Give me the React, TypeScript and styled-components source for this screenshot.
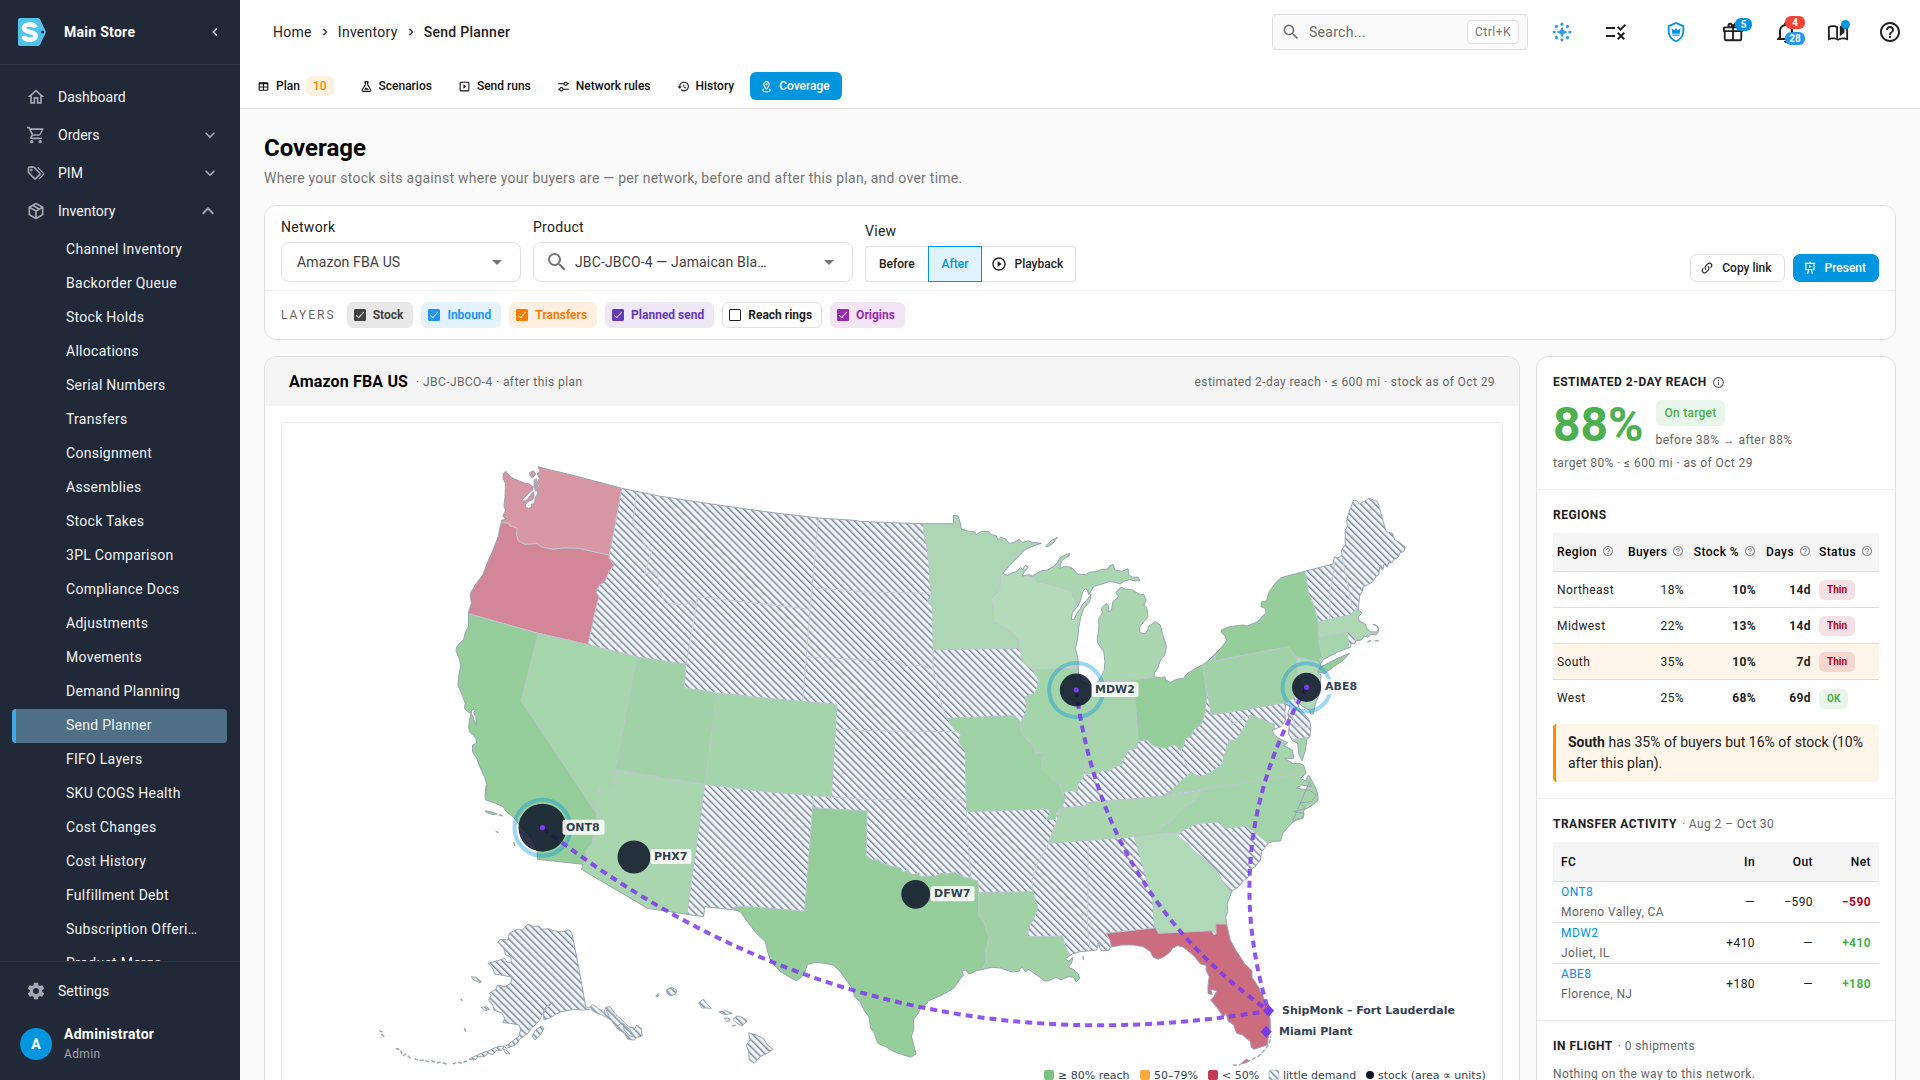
import React from 'react';
import styled, { createGlobalStyle, css } from 'styled-components';
import { MdRule, MdHelpOutline, MdInfoOutline, MdPlayCircleOutline } from 'react-icons/md';

const GlobalStyle = createGlobalStyle`
  *, *::before, *::after { box-sizing: border-box; }
  body { margin: 0; background: #fafafa; }
  body, button, input, select { font-family: Roboto, "Liberation Sans", sans-serif; }
  button { cursor: pointer; }
  a { text-decoration: none; color: inherit; }
`;

const blue = '#0095df';
const line = '#e0e0e0';
const muted = '#757575';

/* ---------- icons ---------- */

const icons = {
  home: 'M12 5.69l5 4.5V18h-2v-6H9v6H7v-7.81l5-4.5M12 3L2 12h3v8h6v-6h2v6h6v-8h3L12 3Z',
  cart: 'M17,18A2,2 0 0,1 19,20A2,2 0 0,1 17,22C15.89,22 15,21.1 15,20C15,18.89 15.89,18 17,18M1,2H4.27L5.21,4H20A1,1 0 0,1 21,5C21,5.17 20.95,5.34 20.88,5.5L17.3,11.97C16.96,12.58 16.3,13 15.55,13H8.1L7.2,14.63L7.17,14.75A0.25,0.25 0 0,0 7.42,15H19V17H7C5.89,17 5,16.1 5,15C5,14.65 5.09,14.32 5.24,14.04L6.6,11.59L3,4H1V2M7,18A2,2 0 0,1 9,20A2,2 0 0,1 7,22C5.89,22 5,21.1 5,20C5,18.89 5.89,18 7,18M16,11L18.78,6H6.14L8.5,11H16Z',
  tags: 'M6.5 10C7.3 10 8 9.3 8 8.5S7.3 7 6.5 7 5 7.7 5 8.5 5.7 10 6.5 10M9 6L16 13L11 18L4 11V6H9M9 4H4C2.9 4 2 4.9 2 6V11C2 11.6 2.2 12.1 2.6 12.4L9.6 19.4C9.9 19.8 10.4 20 11 20S12.1 19.8 12.4 19.4L17.4 14.4C17.8 14 18 13.5 18 13C18 12.4 17.8 11.9 17.4 11.6L10.4 4.6C10.1 4.2 9.6 4 9 4M13.5 5.7L14.5 4.7L21.4 11.6C21.8 12 22 12.5 22 13S21.8 14.1 21.4 14.4L16 19.8L15 18.8L20.7 13L13.5 5.7Z',
  box: 'M21,16.5C21,16.88 20.79,17.21 20.47,17.38L12.57,21.82C12.41,21.94 12.21,22 12,22C11.79,22 11.59,21.94 11.43,21.82L3.53,17.38C3.21,17.21 3,16.88 3,16.5V7.5C3,7.12 3.21,6.79 3.53,6.62L11.43,2.18C11.59,2.06 11.79,2 12,2C12.21,2 12.41,2.06 12.57,2.18L20.47,6.62C20.79,6.79 21,7.12 21,7.5V16.5M12,4.15L10.11,5.22L16,8.61L17.96,7.5L12,4.15M6.04,7.5L12,10.85L13.96,9.75L8.08,6.35L6.04,7.5M5,15.91L11,19.29V12.58L5,9.21V15.91M19,15.91V9.21L13,12.58V19.29L19,15.91Z',
  cog: 'M12,15.5A3.5,3.5 0 0,1 8.5,12A3.5,3.5 0 0,1 12,8.5A3.5,3.5 0 0,1 15.5,12A3.5,3.5 0 0,1 12,15.5M19.43,12.97C19.47,12.65 19.5,12.33 19.5,12C19.5,11.67 19.47,11.34 19.43,11L21.54,9.37C21.73,9.22 21.78,8.95 21.66,8.73L19.66,5.27C19.54,5.05 19.27,4.96 19.05,5.05L16.56,6.05C16.04,5.66 15.5,5.32 14.87,5.07L14.5,2.42C14.46,2.18 14.25,2 14,2H10C9.75,2 9.54,2.18 9.5,2.42L9.13,5.07C8.5,5.32 7.96,5.66 7.44,6.05L4.95,5.05C4.73,4.96 4.46,5.05 4.34,5.27L2.34,8.73C2.21,8.95 2.27,9.22 2.46,9.37L4.57,11C4.53,11.34 4.5,11.67 4.5,12C4.5,12.33 4.53,12.65 4.57,12.97L2.46,14.63C2.27,14.78 2.21,15.05 2.34,15.27L4.34,18.73C4.46,18.95 4.73,19.03 4.95,18.95L7.44,17.94C7.96,18.34 8.5,18.68 9.13,18.93L9.5,21.58C9.54,21.82 9.75,22 10,22H14C14.25,22 14.46,21.82 14.5,21.58L14.87,18.93C15.5,18.67 16.04,18.34 16.56,17.94L19.05,18.95C19.27,19.03 19.54,18.95 19.66,18.73L21.66,15.27C21.78,15.05 21.73,14.78 21.54,14.63L19.43,12.97Z',
  down: 'M7.41,8.58L12,13.17L16.59,8.58L18,10L12,16L6,10L7.41,8.58Z',
  up: 'M7.41,15.41L12,10.83L16.59,15.41L18,14L12,8L6,14L7.41,15.41Z',
  left: 'M15.41,16.58L10.83,12L15.41,7.41L14,6L8,12L14,18L15.41,16.58Z',
  right: 'M8.59,16.58L13.17,12L8.59,7.41L10,6L16,12L10,18L8.59,16.58Z',
  search: 'M9.5,3A6.5,6.5 0 0,1 16,9.5C16,11.11 15.41,12.59 14.44,13.73L14.71,14H15.5L20.5,19L19,20.5L14,15.5V14.71L13.73,14.44C12.59,15.41 11.11,16 9.5,16A6.5,6.5 0 0,1 3,9.5A6.5,6.5 0 0,1 9.5,3M9.5,5C7,5 5,7 5,9.5C5,12 7,14 9.5,14C12,14 14,12 14,9.5C14,7 12,5 9.5,5Z',
  caret: 'M7,10L12,15L17,10H7Z',
  table: 'M5,4H19A2,2 0 0,1 21,6V18A2,2 0 0,1 19,20H5A2,2 0 0,1 3,18V6A2,2 0 0,1 5,4M5,8V12H11V8H5M13,8V12H19V8H13M5,14V18H11V14H5M13,14V18H19V14H13Z',
  flask: 'M5,19A1,1 0 0,0 6,20H18A1,1 0 0,0 19,19C19,18.79 18.93,18.59 18.82,18.43L13,8.35V4H11V8.35L5.18,18.43C5.07,18.59 5,18.79 5,19M6,22A3,3 0 0,1 3,19C3,18.4 3.18,17.84 3.5,17.37L9,7.81V6A1,1 0 0,1 8,5V4A2,2 0 0,1 10,2H14A2,2 0 0,1 16,4V5A1,1 0 0,1 15,6V7.81L20.5,17.37C20.82,17.84 21,18.4 21,19A3,3 0 0,1 18,22H6M13,16L14.34,14.66L16.27,18H7.73L10.39,13.39L13,16M12.5,12A0.5,0.5 0 0,1 13,12.5A0.5,0.5 0 0,1 12.5,13A0.5,0.5 0 0,1 12,12.5A0.5,0.5 0 0,1 12.5,12Z',
  playBox: 'M19,19H5V5H19M19,3H5A2,2 0 0,0 3,5V19A2,2 0 0,0 5,21H19A2,2 0 0,0 21,19V5A2,2 0 0,0 19,3M10,8V16L15,12',
  tune: 'M8,13C6.14,13 4.59,14.28 4.14,16H2V18H4.14C4.59,19.72 6.14,21 8,21C9.86,21 11.41,19.72 11.86,18H22V16H11.86C11.41,14.28 9.86,13 8,13M8,19C6.9,19 6,18.1 6,17C6,15.9 6.9,15 8,15C9.1,15 10,15.9 10,17C10,18.1 9.1,19 8,19M19.86,6C19.41,4.28 17.86,3 16,3C14.14,3 12.59,4.28 12.14,6H2V8H12.14C12.59,9.72 14.14,11 16,11C17.86,11 19.41,9.72 19.86,8H22V6H19.86M16,9C14.9,9 14,8.1 14,7C14,5.9 14.9,5 16,5C17.1,5 18,5.9 18,7C18,8.1 17.1,9 16,9Z',
  history: 'M13.5,8H12V13L16.28,15.54L17,14.33L13.5,12.25V8M13,3A9,9 0 0,0 4,12H1L4.96,16.03L9,12H6A7,7 0 0,1 13,5A7,7 0 0,1 20,12A7,7 0 0,1 13,19C11.07,19 9.32,18.21 8.06,16.94L6.64,18.36C8.27,20 10.5,21 13,21A9,9 0 0,0 22,12A9,9 0 0,0 13,3',
  marker: 'M12 4C14.2 4 16 5.8 16 8C16 10.1 13.9 13.5 12 15.9C10.1 13.4 8 10.1 8 8C8 5.8 9.8 4 12 4M12 2C8.7 2 6 4.7 6 8C6 12.5 12 19 12 19S18 12.4 18 8C18 4.7 15.3 2 12 2M12 6C10.9 6 10 6.9 10 8S10.9 10 12 10 14 9.1 14 8 13.1 6 12 6M20 19C20 21.2 16.4 23 12 23S4 21.2 4 19C4 17.7 5.2 16.6 7.1 15.8L7.7 16.7C6.7 17.2 6 17.8 6 18.5C6 19.9 8.7 21 12 21S18 19.9 18 18.5C18 17.8 17.3 17.2 16.2 16.7L16.8 15.8C18.8 16.6 20 17.7 20 19Z',
  shield: 'M21,11C21,16.55 17.16,21.74 12,23C6.84,21.74 3,16.55 3,11V5L12,1L21,5V11M12,21C15.75,20 19,15.54 19,11.22V6.3L12,3.18L5,6.3V11.22C5,15.54 8.25,20 12,21M16 14H8L7 8L10 10.2L12 7.5L14 10.2L17 8L16 14M16 16.2H8V14.8H16V16.2Z',
  gift: 'M22,12V20A2,2 0 0,1 20,22H4A2,2 0 0,1 2,20V12A1,1 0 0,1 1,11V8A2,2 0 0,1 3,6H6.17C6.06,5.69 6,5.35 6,5A3,3 0 0,1 9,2C10,2 10.88,2.5 11.43,3.24V3.23L12,4L12.57,3.23V3.24C13.12,2.5 14,2 15,2A3,3 0 0,1 18,5C18,5.35 17.94,5.69 17.83,6H21A2,2 0 0,1 23,8V11A1,1 0 0,1 22,12M4,20H11V12H4V20M20,20V12H13V20H20M9,4A1,1 0 0,0 8,5A1,1 0 0,0 9,6A1,1 0 0,0 10,5A1,1 0 0,0 9,4M15,4A1,1 0 0,0 14,5A1,1 0 0,0 15,6A1,1 0 0,0 16,5A1,1 0 0,0 15,4M3,8V10H11V8H3M13,8V10H21V8H13Z',
  bell: 'M10 21H14C14 22.1 13.1 23 12 23S10 22.1 10 21M21 19V20H3V19L5 17V11C5 7.9 7 5.2 10 4.3V4C10 2.9 10.9 2 12 2S14 2.9 14 4V4.3C17 5.2 19 7.9 19 11V17L21 19M17 11C17 8.2 14.8 6 12 6S7 8.2 7 11V18H17V11Z',
  book: 'M19 1L14 6V17L19 12.5V1M21 5V18.5C19.9 18.15 18.7 18 17.5 18C15.8 18 13.35 18.65 12 19.5V6C10.55 4.9 8.45 4.5 6.5 4.5C4.55 4.5 2.45 4.9 1 6V20.65C1 20.9 1.25 21.15 1.5 21.15C1.6 21.15 1.65 21.1 1.75 21.1C3.1 20.45 5.05 20 6.5 20C8.45 20 10.55 20.4 12 21.5C13.35 20.65 15.8 20 17.5 20C19.15 20 20.85 20.3 22.25 21.05C22.35 21.1 22.4 21.1 22.5 21.1C22.75 21.1 23 20.85 23 20.6V6C22.4 5.55 21.75 5.25 21 5M10 18.41C8.75 18.09 7.5 18 6.5 18C5.44 18 4.18 18.19 3 18.5V7.13C3.91 6.73 5.14 6.5 6.5 6.5C7.86 6.5 9.09 6.73 10 7.13V18.41Z',
  link: 'M10.59,13.41C11,13.8 11,14.44 10.59,14.83C10.2,15.22 9.56,15.22 9.17,14.83C7.22,12.88 7.22,9.71 9.17,7.76V7.76L12.71,4.22C14.66,2.27 17.83,2.27 19.78,4.22C21.73,6.17 21.73,9.34 19.78,11.29L18.29,12.78C18.3,11.96 18.17,11.14 17.89,10.36L18.36,9.88C19.54,8.71 19.54,6.81 18.36,5.64C17.19,4.46 15.29,4.46 14.12,5.64L10.59,9.17C9.41,10.34 9.41,12.24 10.59,13.41M13.41,9.17C13.8,8.78 14.44,8.78 14.83,9.17C16.78,11.12 16.78,14.29 14.83,16.24V16.24L11.29,19.78C9.34,21.73 6.17,21.73 4.22,19.78C2.27,17.83 2.27,14.66 4.22,12.71L5.71,11.22C5.7,12.04 5.83,12.86 6.11,13.65L5.64,14.12C4.46,15.29 4.46,17.19 5.64,18.36C6.81,19.54 8.71,19.54 9.88,18.36L13.41,14.83C14.59,13.66 14.59,11.76 13.41,10.59C13,10.2 13,9.56 13.41,9.17Z',
  present: 'M11 1H13V3H21V5H20V16H15.5L17 22H15L13.5 16H10.5L9 22H7L8.5 16H4V5H3V3H11V1M6 5V14H18V5H6M10.5 6.5L15 9.5L10.5 12.5V6.5Z',
};
type IconName = keyof typeof icons;

const Icon = ({ name, size = 24 }: { name: IconName; size?: number }) => (
  <svg width={size} height={size} viewBox="0 0 24 24" fill="currentColor" aria-hidden="true">
    <path d={icons[name]} />
  </svg>
);

const SparkleIcon = () => (
  <svg width="24" height="24" viewBox="0 0 24 24" fill="#2a9df0" aria-hidden="true">
    <path d="M12 7.4C12.8 10.2 13.8 11.2 16.6 12C13.8 12.8 12.8 13.8 12 16.6C11.2 13.8 10.2 12.8 7.4 12C10.2 11.2 11.2 10.2 12 7.4Z" stroke="#2a9df0" strokeWidth="1" />
    {[0, 45, 90, 135, 180, 225, 270, 315].map((a) => (
      <circle key={a} cx="12" cy="4.2" r="1.6" transform={`rotate(${a} 12 12)`} />
    ))}
  </svg>
);

const Logo = () => (
  <svg width="28" height="28" viewBox="0 0 28 28" aria-hidden="true">
    <path d="M2 0H19.5Q21 0 22 1.3L27.4 12.4Q28.2 14 27.4 15.6L22 26.7Q21 28 19.5 28H2Q0 28 0 26V2Q0 0 2 0Z" fill="#4fc3ea" />
    <circle cx="24.6" cy="14" r="1.5" fill="#212938" />
    <path d="M17.4 9.6C16.8 7.4 14.6 6.5 12 6.5C8.8 6.5 6 7.6 6 10.1C6 12.8 8.8 13.2 11.9 13.9C15 14.5 17.6 15.2 17.6 18C17.6 20.5 14.8 21.7 11.9 21.7C8.5 21.7 6 20.4 5.6 17.8" fill="none" stroke="#fff" strokeWidth="4.6" />
  </svg>
);

/* ---------- shell ---------- */

const Shell = styled.div`
  display: grid;
  grid-template-columns: 240px minmax(0, 1fr);
  height: 100vh;
  overflow: hidden;
  color: #212121;
  font-size: 14px;
  line-height: 20px;
`;

const Sidebar = styled.aside`
  display: flex;
  flex-direction: column;
  min-height: 0;
  background: #212938;
  color: #f1f3f5;
`;

const Brand = styled.div`
  display: flex;
  align-items: center;
  gap: 18px;
  flex: none;
  height: 65px;
  padding: 0 16px 0 18px;
  border-bottom: 1px solid #2d3544;
  strong { flex: 1; font-weight: 700; color: #fff; letter-spacing: 0.02em; }
`;

const IconButton = styled.button<{ $lead?: number; $color?: string }>`
  position: relative;
  display: grid;
  place-items: center;
  min-width: 18px;
  margin-left: ${(p) => p.$lead || 0}px;
  padding: 0;
  border: 0;
  background: none;
  color: ${(p) => p.$color || 'inherit'};
`;

const Nav = styled.nav`
  flex: 1;
  min-height: 0;
  overflow: hidden;
  padding-top: 13px;
`;

const NavItem = styled.a`
  display: flex;
  align-items: center;
  gap: 12px;
  height: 38px;
  padding: 0 20px 0 26px;
  span { flex: 1; }
  svg { color: #a3a7ae; }
`;

const SubList = styled.div`
  display: flex;
  flex-direction: column;
  padding: 3px 13px 0 12px;
`;

const SubItem = styled.a<{ $active?: boolean }>`
  flex: none;
  height: 34px;
  padding-left: 50px;
  line-height: 32px;
  letter-spacing: 0.02em;
  border-left: 4px solid transparent;
  border-radius: 4px;
  ${(p) => p.$active && css`
    background: #4e6f85;
    border-left-color: #3fa9ea;
  `}
`;

const SideFooter = styled.div`
  flex: none;
  border-top: 1px solid #2d3544;
  padding: 10px 0 16px;
`;

const Account = styled.div`
  display: flex;
  align-items: center;
  gap: 12px;
  padding: 14px 20px 0;
`;

const Avatar = styled.div`
  width: 32px;
  height: 32px;
  border-radius: 50%;
  background: ${blue};
  color: #fff;
  font-weight: 700;
  line-height: 32px;
  text-align: center;
`;

const Who = styled.div`
  display: flex;
  flex-direction: column;
  strong { font-weight: 700; color: #fff; letter-spacing: 0.02em; }
  small { font-size: 12px; color: #a0a4ab; letter-spacing: 0.03em; }
`;

const Page = styled.div`
  display: flex;
  flex-direction: column;
  min-width: 0;
  min-height: 0;
`;

const TopBar = styled.header`
  display: flex;
  align-items: center;
  justify-content: space-between;
  flex: none;
  height: 64px;
  padding: 0 18px 0 33px;
  background: #fff;
`;

const Crumbs = styled.nav`
  display: flex;
  align-items: center;
  gap: 6px;
  letter-spacing: 0.02em;
  strong { font-weight: 500; }
`;

const Tools = styled.div`
  display: flex;
  align-items: center;
`;

const SearchBox = styled.label`
  display: flex;
  align-items: center;
  gap: 8px;
  width: 256px;
  height: 36px;
  margin-right: 22px;
  padding: 0 8px;
  border: 1px solid #dcdcdc;
  border-radius: 4px;
  background: #fafafa;
  color: ${muted};
  svg { flex: none; }
  input {
    flex: 1;
    min-width: 0;
    border: 0;
    outline: 0;
    padding: 0;
    background: none;
    font-size: 14px;
    letter-spacing: 0.02em;
    &::placeholder { color: #6b6b6b; opacity: 1; }
  }
  kbd {
    padding: 0 7px;
    border: 1px solid #dcdcdc;
    border-radius: 4px;
    background: #fff;
    font: 12px/22px Roboto, sans-serif;
    letter-spacing: 0.04em;
  }
`;

const ToolRow = styled.div`
  display: flex;
  gap: 28px;
  > button { width: 24px; height: 24px; }
`;

const Badge = styled.span<{ $color: string; $top: number; $left: number; $width: number }>`
  position: absolute;
  left: ${(p) => p.$left}px;
  top: ${(p) => p.$top}px;
  width: ${(p) => p.$width}px;
  border-radius: 6px;
  background: ${(p) => p.$color};
  color: #fff;
  font-size: 10px;
  font-weight: 700;
  line-height: 13px;
  text-align: center;
`;

const Dot = styled.span`
  position: absolute;
  left: 15px;
  top: 0;
  width: 9px;
  height: 9px;
  border-radius: 50%;
  background: ${blue};
`;

const Tabs = styled.nav`
  display: flex;
  align-items: center;
  gap: 4px;
  flex: none;
  height: 45px;
  padding: 0 7px;
  border-bottom: 1px solid ${line};
  background: #fff;
`;

const Tab = styled.a<{ $active?: boolean }>`
  display: flex;
  align-items: center;
  gap: 6px;
  height: 28px;
  padding: 0 12px 0 10px;
  border-radius: 6px;
  color: ${(p) => (p.$active ? '#fff' : '#111')};
  background: ${(p) => (p.$active ? blue : 'transparent')};
  font-size: 12px;
  font-weight: 500;
`;

const Count = styled.span`
  padding: 0 7px;
  border-radius: 6px;
  background: #fff0df;
  color: #fb8c00;
  line-height: 20px;
`;

const Main = styled.main`
  flex: 1;
  min-height: 0;
  overflow: hidden;
  padding: 24px;
  background: #fafafa;
`;

const Title = styled.h1`
  margin: 0 0 5px;
  font-size: 24px;
  font-weight: 700;
  line-height: 30px;
  color: #000;
`;

const Lead = styled.p`
  margin: 0 0 16px;
  line-height: 21px;
  color: ${muted};
  letter-spacing: 0.018em;
`;

const Card = styled.section`
  border: 1px solid ${line};
  border-radius: 12px;
  background: #fff;
  overflow: hidden;
`;

/* ---------- filters ---------- */

const FilterRow = styled.div`
  display: flex;
  align-items: flex-end;
  gap: 12px;
  padding: 12px 16px 8px;
  border-bottom: 1px solid #eee;
`;

const Field = styled.div<{ $width?: number }>`
  display: flex;
  flex-direction: column;
  gap: 6px;
  width: ${(p) => (p.$width ? `${p.$width}px` : 'auto')};
  > label, > span { line-height: 18px; letter-spacing: 0.02em; }
`;

const SelectBox = styled.div`
  display: flex;
  align-items: center;
  position: relative;
  height: 40px;
  border: 1px solid ${line};
  border-radius: 8px;
  color: #757575;
  > svg:first-child:not(:only-of-type) { margin-left: 11px; }
  > svg:last-child { position: absolute; right: 11px; pointer-events: none; }
  select {
    flex: 1;
    height: 100%;
    padding: 0 40px 0 15px;
    border: 0;
    outline: 0;
    appearance: none;
    background: transparent;
    color: #424242;
    font-size: 14px;
    letter-spacing: 0.01em;
  }
  > svg:first-child + select { padding-left: 6px; }
`;

const Segments = styled.div`
  display: flex;
`;

const Segment = styled.button<{ $active?: boolean }>`
  display: flex;
  align-items: center;
  gap: 6px;
  height: 36px;
  padding: 0 13px;
  border: 1px solid ${(p) => (p.$active ? blue : line)};
  background: ${(p) => (p.$active ? '#e0f2fc' : '#fff')};
  color: ${(p) => (p.$active ? blue : '#212121')};
  font-size: 12px;
  font-weight: 500;
  &:first-child { border-radius: 4px 0 0 4px; border-right: 0; }
  &:last-child { border-radius: 0 4px 4px 0; border-left: 0; padding: 0 12px 0 9px; gap: 7px; }
`;

const Actions = styled.div`
  display: flex;
  gap: 8px;
  margin-left: auto;
`;

const ActionButton = styled.button<{ $primary?: boolean }>`
  display: flex;
  align-items: center;
  gap: 8px;
  height: 28px;
  padding: 0 12px 0 9px;
  border: 1px solid ${(p) => (p.$primary ? blue : line)};
  border-radius: 7px;
  background: ${(p) => (p.$primary ? blue : '#fff')};
  color: ${(p) => (p.$primary ? '#fff' : '#212121')};
  font-size: 12px;
  font-weight: 500;
`;

const LayerRow = styled.div`
  display: flex;
  align-items: center;
  gap: 8px;
  padding: 11px 16px;
  font-size: 12px;
`;

const LayerCaption = styled.span`
  margin-right: 3px;
  color: #666;
  letter-spacing: 0.17em;
`;

const LayerChip = styled.label<{ $color: string; $bg: string }>`
  display: flex;
  align-items: center;
  gap: 7px;
  height: 26px;
  padding: 0 9px 0 6px;
  border: 1px solid ${(p) => (p.$bg === '#fff' ? line : p.$bg)};
  border-radius: 6px;
  background: ${(p) => p.$bg};
  color: ${(p) => p.$color};
  font-weight: 700;
  input {
    display: grid;
    place-items: center;
    appearance: none;
    width: 12px;
    height: 12px;
    margin: 0;
    border: 1px solid currentColor;
    border-radius: 1px;
    color: inherit;
  }
  input:checked { background: ${(p) => p.$color}; }
  input:checked::after {
    content: '';
    width: 4px;
    height: 8px;
    margin-top: -2px;
    border: solid #fff;
    border-width: 0 1px 1px 0;
    transform: rotate(42deg);
  }
`;

/* ---------- body ---------- */

const Columns = styled.div`
  display: grid;
  grid-template-columns: minmax(0, 1fr) 360px;
  gap: 16px;
  margin-top: 16px;
  align-items: start;
`;

const MapHead = styled.header`
  display: flex;
  align-items: center;
  gap: 8px;
  height: 49px;
  padding: 0 24px;
  background: #f5f5f5;
  h2 { margin: 0; font-size: 16px; font-weight: 700; color: #000; letter-spacing: 0.01em; }
  span { font-size: 12px; color: #666; letter-spacing: 0.034em; }
  span:last-child { margin-left: auto; }
`;

const MapFrame = styled.div`
  margin: 16px;
  border: 1px solid #ececec;
  border-radius: 4px;
  svg { display: block; width: 100%; height: auto; }
  text { font-family: "DejaVu Sans", sans-serif; font-size: 11px; fill: #334155; }
  text.name { font-weight: 700; }
`;

const Block = styled.section`
  padding: 16px;
  border-bottom: 1px solid #eee;
  font-size: 12px;
  letter-spacing: 0.034em;
  color: #666;
`;

const BlockTitle = styled.h3`
  display: flex;
  align-items: center;
  gap: 5px;
  margin: 0 0 8px;
  font-size: 12px;
  font-weight: 400;
  line-height: 19px;
  b { font-weight: 700; color: #212121; letter-spacing: 0.04em; }
`;

const Score = styled.div`
  display: flex;
  align-items: center;
  gap: 12px;
  margin-bottom: 3px;
  > strong { font-size: 48px; line-height: 44px; color: #4caf50; letter-spacing: 0; }
  > div { display: flex; flex-direction: column; align-items: flex-start; gap: 4px; }
`;

const Pill = styled.span<{ $tone: 'good' | 'bad'; $large?: boolean }>`
  display: inline-block;
  padding: ${(p) => (p.$large ? '3px 9px' : '0 8px')};
  border-radius: 6px;
  background: ${(p) => (p.$tone === 'good' ? 'rgba(76,175,80,.12)' : 'rgba(176,0,32,.12)')};
  color: ${(p) => (p.$tone === 'good' ? '#4caf50' : '#b00020')};
  font-size: ${(p) => (p.$large ? 12 : 10)}px;
  font-weight: ${(p) => (p.$large ? 500 : 700)};
  letter-spacing: ${(p) => (p.$large ? '0.02em' : '0')};
`;

const Small = styled.p`
  margin: 0;
`;

const DataTable = styled.table<{ $pad: number; $head: number }>`
  width: 100%;
  table-layout: fixed;
  border-collapse: separate;
  border-spacing: 0;
  font-size: 12px;
  color: #212121;
  th, td { padding: 0 ${(p) => p.$pad}px; text-align: right; white-space: nowrap; border-bottom: 1px solid #dcdcdc; }
  th:first-child, td:first-child { text-align: left; }
  th { height: ${(p) => p.$head}px; background: #f5f5f5; color: #000; font-weight: 500; }
  th svg { margin-left: 5px; color: #888; vertical-align: -1px; }
  td { height: 36px; }
  tbody tr:last-child td { border-bottom: 0; }
`;

const RegionTable = styled(DataTable)`
  col:nth-child(1) { width: 71px; }
  col:nth-child(2) { width: 64px; }
  col:nth-child(3) { width: 72px; }
  col:nth-child(4) { width: 55px; }
  th:last-child, td:last-child { text-align: left; }
  td:nth-child(3), td:nth-child(4) { font-weight: 700; }
`;

const TransferTable = styled(DataTable)`
  col:nth-child(2) { width: 62px; }
  col:nth-child(3), col:nth-child(4) { width: 58px; }
`;

const Row = styled.tr<{ $warn?: boolean }>`
  background: ${(p) => (p.$warn ? '#fff5e9' : 'transparent')};
`;

const FcCell = styled.td`
  && { line-height: 20px; height: 40px; }
  a { display: block; color: ${blue}; }
  small { display: block; font-size: 12px; color: #666; line-height: 20px; }
`;

const NetCell = styled.td<{ $down?: boolean }>`
  font-weight: 700;
  color: ${(p) => (p.$down ? '#b00020' : '#4caf50')};
`;

const Callout = styled.p`
  margin: 8px 0 0;
  padding: 8px 12px;
  border-left: 3px solid #fb8c00;
  border-radius: 4px;
  background: #fff5e9;
  color: #212121;
  font-size: 14px;
  line-height: 21px;
  letter-spacing: 0;
`;

/* ---------- map data ---------- */

type Tile = (points: string) => number[][];
// Border points were digitised on four overlapping tiles; each maps its own grid to chart units.
const tile = (ox: number, oy: number, kx: number, ky: number): Tile => (points) =>
  points.trim().split(/\s+/).map((p) => {
    const [x, y] = p.split(',').map(Number);
    return [ox + x / kx, oy + y / ky];
  });
const NW = tile(280, 430, 2.6133, 3);
const NE = tile(860, 430, 2.6133, 3);
const SW = tile(360, 780, 2.8, 3);
const SE = tile(900, 780, 2.6133, 3);

const open = (...parts: number[][][]) =>
  'M' + parts.flat().map(([x, y]) => `${x.toFixed(1)} ${y.toFixed(1)}`).join('L');
const shape = (...parts: number[][][]) => open(...parts) + 'Z';

const mainland = shape(
  NW('590,124 600,138 612,147 625,152 640,160 650,160 655,166 662,170 660,180 650,190 642,198 634,208 634,213 642,212 650,204 656,193 662,186 664,196 661,208 650,214 642,222 642,232 650,235 658,232 656,222 665,222 667,205 674,188 672,175 678,168 672,158 678,145 672,132 680,124 674,110 700,118 780,140 893,175 990,198 1150,226 1300,250 1407,264 1500,271'),
  NE('0,274 80,278 165,281 245,281 244,256 256,258 262,280 265,298 285,304 300,306 303,314 318,304 335,304 345,314 356,317 360,330 367,322 380,326 390,340 402,338 415,328 424,337 440,333 450,337 474,340 448,350 430,360 400,395 373,430 385,436 398,428 410,425 420,412 424,420 432,406 440,412 430,424 424,438 440,434 450,438 462,430 475,422 490,420 505,410 515,400 522,385 530,378 548,370 546,378 534,386 527,394 522,415 538,408 555,415 568,432 590,434 602,426 618,425 632,418 648,417 652,408 662,403 665,420 685,424 700,416 703,435 712,442 726,441 732,452 720,453 705,449 690,453 680,462 664,456 650,455 625,465 612,468 605,480 598,494 594,480 588,476 582,486 575,515 568,530 555,548 552,568 560,568 566,552 575,538 582,522 592,512 604,492 600,515 585,535 577,560 572,590 569,625 563,655 570,690 571,730 582,757 605,765 625,752 638,722 640,695 637,665 622,640 620,628 624,600 624,565 634,548 630,535 644,520 650,530 648,545 657,542 661,515 672,505 675,498 668,488 682,472 695,478 712,480 728,492 742,494 748,510 742,525 750,535 752,560 740,578 730,592 732,608 745,612 752,600 755,588 772,575 785,585 790,610 798,640 801,650 796,676 785,690 778,715 770,728 768,740 785,744 797,740 798,750 812,757 828,748 845,745 858,728 880,713 895,705 912,690 928,672 945,652 958,632 955,618 945,608 945,600 965,590 1000,585 1010,588 1030,580 1045,570 1050,560 1062,550 1058,535 1048,530 1050,515 1063,512 1065,500 1070,485 1085,460 1100,443 1163,424 1236,402 1240,380 1248,384 1260,375 1258,360 1268,345 1268,300 1274,290 1272,270 1280,240 1290,210 1298,212 1305,222 1318,214 1330,205 1345,212 1352,214 1358,235 1365,265 1375,305 1392,310 1397,330 1408,335 1425,352 1422,364 1410,370 1408,380 1396,388 1388,400 1382,395 1378,412 1370,402 1366,420 1358,412 1356,432 1348,440 1340,455 1325,465 1315,470 1312,485 1305,500 1303,530 1302,540 1312,548 1303,560 1304,572 1320,582 1325,596 1334,605 1350,606 1356,595 1348,585 1340,583 1352,588 1356,604 1348,615 1335,612 1328,622 1318,618 1310,630 1296,632 1292,642 1284,640 1282,652 1250,665 1212,688 1204,700 1203,715 1196,728 1205,735 1202,770 1198,800 1190,820 1185,852 1178,852 1174,840 1155,828 1142,815 1148,835 1160,850 1175,872 1178,892 1176,920 1168,928 1164,960 1155,992 1146,970 1144,940 1130,932 1120,912 1122,880 1118,850 1124,830 1112,822 1110,850 1112,870 1100,890 1078,900 1080,912 1092,924 1118,938 1108,948 1130,960 1134,985 1110,985 1130,1000 1150,1000 1160,1008 1166,1030 1150,1046 1165,1052 1172,1035 1190,1072 1197,1095 1197,1112 1176,1130 1160,1140 1158,1162 1130,1175'),
  SE('1070,5 1075,20 1050,15 1035,25 1070,30 1088,45 1075,65 1045,68 1060,85 1030,95 1056,100 1053,116 1035,118 1015,140 1000,160 995,183 975,184 962,190 945,215 942,240 930,258 915,270 912,288 895,305 885,320 868,332 862,350 855,370 856,395 851,410 855,440 863,480 880,515 900,550 920,572 920,592 935,618 945,640 958,675 967,715 968,745 962,775 960,795 945,800 925,808 918,802 916,785 905,775 895,765 880,760 872,735 858,724 852,700 845,710 830,685 812,660 820,650 828,632 812,628 816,645 805,640 805,618 808,590 800,570 800,556 785,552 770,530 752,512 738,500 725,497 712,505 705,517 690,530 675,538 660,530 655,515 635,500 610,495 580,495 550,502 545,512 525,512 518,488 514,510 490,513 470,515 450,522 432,536 440,545 452,532 448,550 440,562 452,568 465,580 470,595 460,606 455,592 440,590 420,600 408,592 390,602 378,603 365,592 345,575 335,568 328,575 318,560 310,575 290,575 262,564 240,562 220,567 200,572 180,582 172,570 162,572 166,585 155,600 140,625 110,645 75,662 66,675 55,680 48,700 35,720 36,745 30,770 36,795 42,822 28,832'),
  SW('1495,815 1475,802 1450,790 1440,760 1430,745 1425,710 1412,692 1400,665 1385,650 1380,628 1365,605 1345,575 1325,555 1300,550 1275,547 1253,553 1246,575 1235,592 1222,602 1200,590 1175,572 1160,555 1150,545 1143,520 1135,485 1110,460 1085,425 1065,395 1050,390 965,380 962,410 915,403 805,385 620,268 625,253 497,238 496,215 488,190 470,160 450,140 430,112 410,95 400,80 380,70 352,60 350,45 354,15'),
  NW('537,1105 537,1085 541,1065 534,1040 520,1005 514,985 503,965 503,945 514,940 512,925 495,905 493,890 495,870 500,850 508,872 513,887 512,860 506,848 512,838 502,838 500,850 494,848 482,835 484,820 478,800 465,765 467,740 472,710 470,690 460,662 462,650 480,628 484,608 492,590 493,545 500,520 497,492 510,465 530,435 541,400 555,365 570,320 575,292 580,270 592,268 582,258 590,240 585,230 588,200 589,160 583,145 584,130'),
);

const islands = [
  { fill: '#add7b4', d: shape(NE('485,348 500,332 516,322 506,338 492,350')) },
  { fill: '#96ce9b', d: shape(NE('1202,712 1225,698 1262,678 1280,670 1262,692 1240,708 1215,730 1196,726')) },
  { fill: '#cb6d7f', d: shape(SE('890,852 905,838 915,842 900,850')) },
  { fill: '#96ce9b', d: shape(SW('350,92 368,96 385,102 372,104 356,98')) },
  { fill: '#d796a3', d: shape(NW('652,128 662,122 668,132 660,144 654,138')) },
  { fill: '#d796a3', d: shape(NW('664,150 670,146 671,160 675,176 669,184 664,170')) },
];

const alaska = shape(
  SW('470,432 485,440 500,438 510,448 530,446 540,452 565,455 585,450 593,458 612,560 632,680 640,684 652,674 668,686 684,698 688,682 700,680 712,698 735,722 752,740 770,745 775,735 787,745 790,768 775,772 768,780 750,778 740,760 720,745 705,722 690,712 675,704 660,698 645,688 625,690 600,688 580,692 560,696 545,705 530,715 515,720 514,700 522,684 540,668 520,680 512,700 500,725 480,745 470,760 450,775 435,795 410,805 405,800 425,785 445,768 450,748 445,735 420,730 400,728 405,715 398,700 375,690 372,675 360,660 368,645 362,640 380,628 385,615 405,620 422,610 426,592 400,586 378,582 370,562 358,550 385,542 405,535 412,548 424,548 422,530 408,525 402,505 386,487 392,478 414,480 418,460 440,448 455,450'),
);
const remote = [
  alaska,
  shape(SW('482,768 490,752 508,738 515,745 505,765 490,780')),
  shape(SW('340,682 355,680 362,688 350,692')),
  shape(SW('312,590 325,592 340,605 336,608 318,600')),
  shape(SW('405,798 395,812 380,812 372,824 360,820 348,830 330,830 322,840 305,838 318,830 335,822 360,812 385,800')),
  shape(SW('400,806 412,812 420,822 408,820')),
  shape(SW('690,690 705,700 730,730 722,738 700,715')),
  shape(SW('735,730 755,748 768,770 755,768 740,750')),
  shape(SW('858,630 872,622 887,630 884,642 870,648 860,640')),
  shape(SW('828,648 838,640 834,650')),
  shape(SW('948,668 962,658 970,670 984,685 968,684 958,684')),
  shape(SW('1005,696 1022,692 1042,700 1022,704')),
  shape(SW('1020,714 1032,714 1036,722 1026,724')),
  shape(SW('1044,718 1056,708 1070,712 1084,722 1070,738 1056,730')),
  shape(SW('1088,758 1112,766 1130,776 1140,794 1157,808 1140,820 1120,830 1104,850 1090,840 1088,815 1082,795 1092,780')),
];
const specks = [
  SW('300,842 285,850 272,846 260,852'),
  SW('242,852 225,846 215,848 200,842 190,845 178,840 165,842 152,836'),
  SW('142,835 128,822 120,828 112,808 100,806'),
  SW('68,770 60,762 62,756 54,752'),
  SW('282,656 287,662'),
  SW('292,744 297,758'),
  SW('380,154 388,158'),
  SW('388,104 402,108'),
  SW('430,186 434,200'),
  SW('1042,738 1052,736'),
  SE('870,856 890,854'),
  SE('920,838 940,826 955,808 965,790 968,770'),
  SE('478,528 480,545'),
  NE('1345,632 1360,632'),
  NE('1326,636 1338,630'),
].map((p) => open(p)).join('');

const states: { id: string; fill: string; d: string }[] = [
  { id: 'WA', fill: '#d796a3', d: shape(NW('540,90 680,90 893,175 875,290 860,375 830,368 780,355 740,354 715,358 685,352 672,341 640,343 622,332 618,312 620,295 600,287 598,280 582,278 550,278')) },
  { id: 'OR', fill: '#d28697', d: shape(NW('550,278 582,278 598,280 600,287 620,295 618,312 622,332 640,343 672,341 685,352 715,358 740,354 780,355 830,368 860,375 862,388 873,405 860,425 848,455 835,465 826,487 834,500 826,530 805,644 675,610 495,552 460,545')) },
  { id: 'NV', fill: '#a5d5ab', d: shape(NW('675,610 805,644 932,680 876,1020 866,1075 860,1084 845,1072 832,1074 830,1110 826,1148 630,812')) },
  { id: 'UT', fill: '#a1d2a7', d: shape(NW('932,680 1061,703 1056,773 1143,789 1110,1063 876,1020')) },
  { id: 'CO', fill: '#a4d4aa', d: shape(NW('1143,789 1300,808 1455,823 1441,1101 1270,1085 1110,1063')) },
  { id: 'AZ', fill: '#a9d5af', d: shape(NW('876,1020 1110,1063'), SW('915,403 800,440 600,300 625,253 635,235 632,212 650,190 652,168 665,140 661,100'), NW('830,1110 832,1074 845,1072 860,1084 866,1075')) },
  { id: 'CA', fill: '#96ce9b', d: shape(NW('450,545 495,552 675,610 630,812 826,1148'), SW('661,100 665,140 652,168 650,190 632,212 635,235 625,253 497,300 320,260 200,0'), NW('400,800')) },
  { id: 'TX', fill: '#96ce9b', d: shape(SW('1267,83 1420,93 1417,226 1435,240 1450,238 1460,248 1490,260 1510,262 1522,276 1535,270'), SE('15,272 30,284 50,278 52,290 80,288 90,292 105,280 125,282 142,276 165,290 185,296 203,303 206,340 206,405 222,435 233,475 225,510 226,545 215,566 210,640 80,900'), SW('1420,900 1100,640 1030,395 1055,378 1245,393')) },
  { id: 'MN', fill: '#add7b4', d: shape(NE('165,281 168,320 174,345 180,400 182,450 187,490 176,515 190,530 191,659 415,655 414,628 400,612 385,598 365,588 350,575 348,530 343,508 352,495 365,480 367,440 373,430 560,330 500,250 245,240')) },
  { id: 'MI', fill: '#aad6b0', d: shape(NE('430,420 520,350 740,390 900,600 770,742 715,750 600,757 590,600 556,560 455,455')) },
  { id: 'WI', fill: '#b3dbb9', d: shape(NE('365,432 380,425 425,390 430,438 455,440 462,454 500,465 520,470 545,480 556,490 555,500 564,512 560,530 552,568 580,528 604,488 612,505 600,600 600,715 450,720 435,706 425,695 420,670 415,655 414,628 400,612 385,598 365,588 350,575 348,530 343,508 352,495 365,480 367,440')) },
  { id: 'IL', fill: '#a4d4aa', d: shape(NE('450,720 575,714 592,752 598,900 590,985 583,1040 568,1065 568,1085 550,1082 537,1085 530,1095 522,1065 500,1045 478,1020 474,1000 482,970 472,966 458,970 452,945 435,928 420,905 418,880 432,850 435,830 432,800 458,790 468,752')) },
  { id: 'IN', fill: '#a6d5ad', d: shape(NE('592,752 640,752 715,750 727,935 722,955 702,960 690,985 684,1005 665,1010 655,1022 630,1022 618,1034 602,1030 588,1036 590,985 598,900')) },
  { id: 'OH', fill: '#96ce9b', d: shape(NE('715,750 768,742 812,740 895,690 906,795 902,850 890,885 872,900 865,920 850,925 845,950 838,962 822,945 808,950 800,955 770,950 750,930 727,932')) },
  { id: 'PA', fill: '#a1d2a7', d: shape(NE('895,705 925,660 928,692 1118,650 1135,668 1140,682 1150,695 1142,720 1145,740 1160,765 1140,800 1112,818 918,855')) },
  { id: 'NJ', fill: '#b2dab8', d: shape(NE('1140,680 1195,695 1215,730 1215,800 1190,870 1160,840 1135,815 1145,795 1165,768 1145,740')) },
  { id: 'NY', fill: '#96ce9b', d: shape(NE('928,692 925,500 1100,420 1163,424 1168,455 1172,490 1186,525 1190,545 1198,575 1198,620 1207,680 1203,715 1195,695 1140,680 1118,650')) },
  { id: 'MA', fill: '#aed8b4', d: shape(NE('1198,575 1282,555 1300,530 1380,560 1380,630 1310,640 1298,640 1290,615 1275,605 1198,625')) },
  { id: 'CT', fill: '#a5d5ab', d: shape(NE('1198,625 1273,607 1280,660 1215,700 1200,690 1207,680')) },
  { id: 'MO', fill: '#9ed1a3', d: shape(NE('228,865 405,857 418,875 420,905 435,928 452,945 458,970 472,966 482,970 474,1000 478,1020 500,1045 522,1065 530,1095 538,1100 530,1130 515,1150 510,1168 485,1170 497,1150 490,1137 278,1145 275,962 258,935 263,912 245,898')) },
  { id: 'VA', fill: '#a5d4ab', d: shape(NE('795,1095 815,1080 832,1060 865,1028 890,1040 920,1025 945,1005 952,975 965,930 980,932 1000,900 1020,856 1050,868 1068,878 1085,882 1078,905 1120,930 1150,925 1178,920 1200,980 1180,1025 890,1080')) },
  { id: 'NC', fill: '#a3d3a9', d: shape(NE('890,1080 1180,1025 1230,1060'), SE('1130,60 1000,200 960,188 935,165 905,138 848,145 835,125 770,133 735,155 677,160 682,145 715,118 740,85 765,68 782,50 787,32')) },
  { id: 'TN', fill: '#a9d6af', d: shape(SE('415,85 485,78 487,68 690,48 787,32 782,50 765,68 740,85 715,118 682,145 677,160 612,170 388,190 400,150 412,120')) },
  { id: 'GA', fill: '#b0dab7', d: shape(SE('612,170 677,160 735,155 726,168 750,190 770,215 800,240 830,275 845,310 865,335 885,400 860,432 828,432 828,462 815,452 675,460 665,440 660,360')) },
  { id: 'FL', fill: '#cb6d7f', d: shape(SE('538,460 668,443 675,460 815,452 820,464 826,462 825,432 900,432 1000,700 980,900 700,900 520,540 552,500 548,480')) },
  { id: 'LA', fill: '#a0d2a5', d: shape(SE('206,338 348,335 352,360 360,380 352,410 338,440 332,470 425,468 432,500 442,520 500,620 300,640 213,620 215,566 226,545 225,510 233,475 222,435 206,405')) },
];

// Borders between states that carry little demand.
const borders = [
  open(NW('932,182 922,278 932,302 945,325 955,350 972,362 962,395 953,432 985,425 990,470 1005,520 1060,525 1072,510 1085,528 1092,500 1385,538')),
  open(NW('1092,500 1061,703')),
  open(NW('1407,264 1385,538 1366,815')),
  open(NW('1395,474 1500,482'), NE('0,486 187,490')),
  open(NW('1378,680 1500,688'), NE('0,690 100,692 120,710 165,705 191,722')),
  open(NW('1455,897 1500,899'), NE('0,902 255,905')),
  open(NW('1441,1101 1500,1105'), NE('0,1108 278,1110')),
  open(NE('191,659 191,722 205,780 215,830 228,865')),
  open(SW('1270,50 1267,83')),
  open(SE('173,95 185,296')),
  open(SE('388,190 375,220 355,260 345,300 348,335')),
  open(SE('492,182 490,440 497,512')),
  open(NE('1240,395 1238,430 1228,480 1228,566')),
  open(NE('1260,380 1285,525')),
  open(NE('838,960 850,1000 866,1028')),
  open(NE('965,848 970,885 1000,865 1020,856')),
  open(NE('1122,825 1138,890 1178,892')),
];

type Site = { id: string; x: number; y: number; r: number; ring?: number; label: number; width: number };
const sites: Site[] = [
  { id: 'ONT8', x: 542.5, y: 827.7, r: 24, ring: 28, label: 566, width: 42 },
  { id: 'PHX7', x: 634, y: 857, r: 16.5, label: 654, width: 41 },
  { id: 'DFW7', x: 915.7, y: 894.3, r: 14.4, label: 934, width: 44 },
  { id: 'MDW2', x: 1076.2, y: 690, r: 16.4, ring: 27, label: 1095, width: 47 },
  { id: 'ABE8', x: 1306.6, y: 687.3, r: 14.6, ring: 24, label: 1325, width: 38 },
];
const origins = [
  { id: 'ShipMonk – Fort Lauderdale', x: 1268.5, y: 1010.7, label: 1282 },
  { id: 'Miami Plant', x: 1266.2, y: 1031.7, label: 1279 },
];

const routeFrom = (s: Site) => {
  const o = origins[0];
  const bend = 0.22;
  const cx = (s.x + o.x) / 2 - (o.y - s.y) * bend;
  const cy = (s.y + o.y) / 2 + (o.x - s.x) * bend;
  return `M${s.x} ${s.y}Q${cx} ${cy} ${o.x} ${o.y}`;
};

const Diamond = ({ x, y }: { x: number; y: number }) => (
  <path d={`M${x} ${y - 6}L${x + 5.6} ${y}L${x} ${y + 6}L${x - 5.6} ${y}Z`} fill="#7c3aed" />
);

const CoverageMap = () => (
  <svg viewBox="282 423 1220 700" role="img" aria-label="Coverage by state">
    <defs>
      <pattern id="hatch" width="5" height="5" patternUnits="userSpaceOnUse" patternTransform="rotate(-45)">
        <rect width="5" height="5" fill="#f1f5f9" />
        <rect width="1.5" height="5" fill="#7c8ba0" />
      </pattern>
      <clipPath id="land">
        <path d={mainland} />
      </clipPath>
    </defs>
    <path d={mainland} fill="url(#hatch)" />
    <g clipPath="url(#land)" strokeLinejoin="round">
      <path d={borders.join('')} fill="none" stroke="#c6ced9" strokeWidth="1" />
      {states.map((s) => (
        <path key={s.id} d={s.d} fill={s.fill} stroke="#bcc5cf" strokeWidth="1" />
      ))}
    </g>
    <g stroke="#9aa5b5" strokeWidth="1" strokeLinejoin="round">
      <path d={mainland} fill="none" />
      {islands.map((i) => (
        <path key={i.d} d={i.d} fill={i.fill} />
      ))}
      {remote.map((d) => (
        <path key={d} d={d} fill="url(#hatch)" />
      ))}
      <path d={specks} fill="none" strokeDasharray="4 2" strokeWidth="1.4" />
    </g>
    {sites.filter((s) => s.ring).map((s) => (
      <circle key={s.id} cx={s.x} cy={s.y} r={s.ring} fill="none" stroke="#0095df" strokeOpacity="0.38" strokeWidth="4" />
    ))}
    <g fill="none" stroke="#7c3aed" strokeOpacity="0.85" strokeWidth="4" strokeDasharray="7 5">
      <path d={routeFrom(sites[0])} />
      <path d={routeFrom(sites[3])} />
      <path d={routeFrom(sites[4])} />
    </g>
    {sites.map((s) => (
      <circle key={s.id} cx={s.x} cy={s.y} r={s.r} fill="#0f172a" fillOpacity="0.87" />
    ))}
    {sites.map((s) => (
      <g key={s.id}>
        {s.ring && <circle cx={s.x} cy={s.y} r="2.6" fill="#7c3aed" />}
        <rect x={s.label - 3.5} y={s.y - 8} width={s.width} height="15" rx="2.5" fill="#fff" fillOpacity="0.88" />
        <text className="name" x={s.label} y={s.y + 3}>{s.id}</text>
      </g>
    ))}
    {origins.map((o) => (
      <g key={o.id}>
        <Diamond x={o.x} y={o.y} />
        <text className="name" x={o.label} y={o.y + 3}>{o.id}</text>
      </g>
    ))}
    <rect x="1044" y="1070" width="10" height="10" rx="2" fill="#7bc47f" />
    <text x="1058" y="1079">≥ 80% reach</text>
    <rect x="1140" y="1070" width="10" height="10" rx="2" fill="#fba940" />
    <text x="1154" y="1079">50–79%</text>
    <rect x="1208" y="1070" width="10" height="10" rx="2" fill="#c43c54" />
    <text x="1222" y="1079">&lt; 50%</text>
    <rect x="1269" y="1070" width="10" height="10" rx="2" fill="url(#hatch)" stroke="#b4bdc9" strokeWidth="0.8" />
    <text x="1283" y="1079">little demand</text>
    <circle cx="1370" cy="1075" r="4" fill="#0f172a" />
    <text x="1378" y="1079">stock (area ∝ units)</text>
  </svg>
);

/* ---------- content data ---------- */

const subPages = [
  'Channel Inventory', 'Backorder Queue', 'Stock Holds', 'Allocations', 'Serial Numbers', 'Transfers',
  'Consignment', 'Assemblies', 'Stock Takes', '3PL Comparison', 'Compliance Docs', 'Adjustments', 'Movements',
  'Demand Planning', 'Send Planner', 'FIFO Layers', 'SKU COGS Health', 'Cost Changes', 'Cost History',
  'Fulfillment Debt', 'Subscription Offeri…', 'Product Merge',
];

const tabs: { label: string; icon: IconName; count?: number; active?: boolean }[] = [
  { label: 'Plan', icon: 'table', count: 10 },
  { label: 'Scenarios', icon: 'flask' },
  { label: 'Send runs', icon: 'playBox' },
  { label: 'Network rules', icon: 'tune' },
  { label: 'History', icon: 'history' },
  { label: 'Coverage', icon: 'marker', active: true },
];

const layers = [
  { label: 'Stock', color: '#424242', bg: '#e8e8e8', on: true },
  { label: 'Inbound', color: '#2196f3', bg: '#e4f2fe', on: true },
  { label: 'Transfers', color: '#fb7c00', bg: '#ffefe0', on: true },
  { label: 'Planned send', color: '#673ab7', bg: '#ede7f6', on: true },
  { label: 'Reach rings', color: '#212121', bg: '#fff', on: false },
  { label: 'Origins', color: '#9c27b0', bg: '#f3e5f5', on: true },
];

const regions = [
  { name: 'Northeast', buyers: '18%', stock: '10%', days: '14d', ok: false },
  { name: 'Midwest', buyers: '22%', stock: '13%', days: '14d', ok: false },
  { name: 'South', buyers: '35%', stock: '10%', days: '7d', ok: false, warn: true },
  { name: 'West', buyers: '25%', stock: '68%', days: '69d', ok: true },
];

const transfers = [
  { fc: 'ONT8', city: 'Moreno Valley, CA', inn: '—', out: '−590', net: '−590', down: true },
  { fc: 'MDW2', city: 'Joliet, IL', inn: '+410', out: '—', net: '+410' },
  { fc: 'ABE8', city: 'Florence, NJ', inn: '+180', out: '—', net: '+180' },
];

export default function App() {
  return (
    <Shell>
      <GlobalStyle />
      <Sidebar>
        <Brand>
          <Logo />
          <strong>Main Store</strong>
          <IconButton aria-label="Collapse sidebar"><Icon name="left" size={16} /></IconButton>
        </Brand>
        <Nav>
          <NavItem href="#"><Icon name="home" size={20} /><span>Dashboard</span></NavItem>
          <NavItem href="#"><Icon name="cart" size={20} /><span>Orders</span><Icon name="down" size={20} /></NavItem>
          <NavItem href="#"><Icon name="tags" size={20} /><span>PIM</span><Icon name="down" size={20} /></NavItem>
          <NavItem href="#"><Icon name="box" size={20} /><span>Inventory</span><Icon name="up" size={24} /></NavItem>
          <SubList>
            {subPages.map((p) => (
              <SubItem key={p} href="#" $active={p === 'Send Planner'}>{p}</SubItem>
            ))}
          </SubList>
        </Nav>
        <SideFooter>
          <NavItem href="#"><Icon name="cog" size={20} /><span>Settings</span></NavItem>
          <Account>
            <Avatar>A</Avatar>
            <Who><strong>Administrator</strong><small>Admin</small></Who>
          </Account>
        </SideFooter>
      </Sidebar>

      <Page>
        <TopBar>
          <Crumbs aria-label="Breadcrumb">
            <a href="#">Home</a>
            <Icon name="right" size={14} />
            <a href="#">Inventory</a>
            <Icon name="right" size={14} />
            <strong>Send Planner</strong>
          </Crumbs>
          <Tools>
            <SearchBox>
              <Icon name="search" size={20} />
              <input placeholder="Search..." aria-label="Search" />
              <kbd>Ctrl+K</kbd>
            </SearchBox>
            <ToolRow>
              <IconButton aria-label="Assistant"><SparkleIcon /></IconButton>
              <IconButton aria-label="Tasks" $lead={2}><MdRule size={24} /></IconButton>
              <IconButton aria-label="Protection" $lead={8} $color={blue}><Icon name="shield" size={22} /></IconButton>
              <IconButton aria-label="Rewards" $lead={5}>
                <Icon name="gift" size={22} />
                <Badge $color={blue} $top={-2} $left={14} $width={17}>5</Badge>
              </IconButton>
              <IconButton aria-label="Notifications" $lead={1}>
                <Icon name="bell" />
                <Badge $color="#f44336" $top={-4} $left={11} $width={20}>4</Badge>
                <Badge $color="#2196f3" $top={12} $left={11} $width={20}>28</Badge>
              </IconButton>
              <IconButton aria-label="Guide"><Icon name="book" size={22} /><Dot /></IconButton>
              <IconButton aria-label="Help"><MdHelpOutline size={24} /></IconButton>
            </ToolRow>
          </Tools>
        </TopBar>

        <Tabs>
          {tabs.map((t) => (
            <Tab key={t.label} href="#" $active={t.active}>
              <Icon name={t.icon} size={13} />
              {t.label}
              {t.count && <Count>{t.count}</Count>}
            </Tab>
          ))}
        </Tabs>

        <Main>
          <Title>Coverage</Title>
          <Lead>Where your stock sits against where your buyers are — per network, before and after this plan, and over time.</Lead>

          <Card>
            <FilterRow>
              <Field $width={240}>
                <label htmlFor="network">Network</label>
                <SelectBox>
                  <select id="network"><option>Amazon FBA US</option></select>
                  <Icon name="caret" />
                </SelectBox>
              </Field>
              <Field $width={320}>
                <label htmlFor="product">Product</label>
                <SelectBox>
                  <Icon name="search" />
                  <select id="product"><option>JBC-JBCO-4 — Jamaican Bla…</option></select>
                  <Icon name="caret" />
                </SelectBox>
              </Field>
              <Field>
                <span>View</span>
                <Segments>
                  <Segment>Before</Segment>
                  <Segment $active>After</Segment>
                  <Segment><MdPlayCircleOutline size={16} />Playback</Segment>
                </Segments>
              </Field>
              <Actions>
                <ActionButton><Icon name="link" size={14} />Copy link</ActionButton>
                <ActionButton $primary><Icon name="present" size={14} />Present</ActionButton>
              </Actions>
            </FilterRow>
            <LayerRow>
              <LayerCaption>LAYERS</LayerCaption>
              {layers.map((l) => (
                <LayerChip key={l.label} $color={l.color} $bg={l.bg}>
                  <input type="checkbox" defaultChecked={l.on} />
                  {l.label}
                </LayerChip>
              ))}
            </LayerRow>
          </Card>

          <Columns>
            <Card>
              <MapHead>
                <h2>Amazon FBA US</h2>
                <span>· JBC-JBCO-4 · after this plan</span>
                <span>estimated 2-day reach · ≤ 600 mi · stock as of Oct 29</span>
              </MapHead>
              <MapFrame><CoverageMap /></MapFrame>
            </Card>

            <Card>
              <Block>
                <BlockTitle><b>ESTIMATED 2-DAY REACH</b><MdInfoOutline size={13} /></BlockTitle>
                <Score>
                  <strong>88%</strong>
                  <div>
                    <Pill $tone="good" $large>On target</Pill>
                    <span>before 38% → after 88%</span>
                  </div>
                </Score>
                <Small>target 80% · ≤ 600 mi · as of Oct 29</Small>
              </Block>

              <Block>
                <BlockTitle><b>REGIONS</b></BlockTitle>
                <RegionTable $pad={4} $head={39}>
                  <colgroup><col /><col /><col /><col /><col /></colgroup>
                  <thead>
                    <tr>
                      {['Region', 'Buyers', 'Stock %', 'Days', 'Status'].map((h) => (
                        <th key={h} scope="col">{h}<MdHelpOutline size={12} /></th>
                      ))}
                    </tr>
                  </thead>
                  <tbody>
                    {regions.map((r) => (
                      <Row key={r.name} $warn={r.warn}>
                        <td>{r.name}</td>
                        <td>{r.buyers}</td>
                        <td>{r.stock}</td>
                        <td>{r.days}</td>
                        <td><Pill $tone={r.ok ? 'good' : 'bad'}>{r.ok ? 'OK' : 'Thin'}</Pill></td>
                      </Row>
                    ))}
                  </tbody>
                </RegionTable>
                <Callout><b>South</b> has 35% of buyers but 16% of stock (10% after this plan).</Callout>
              </Block>

              <Block>
                <BlockTitle><b>TRANSFER ACTIVITY</b> · Aug 2 – Oct 30</BlockTitle>
                <TransferTable $pad={8} $head={40}>
                  <colgroup><col /><col /><col /><col /></colgroup>
                  <thead>
                    <tr><th scope="col">FC</th><th scope="col">In</th><th scope="col">Out</th><th scope="col">Net</th></tr>
                  </thead>
                  <tbody>
                    {transfers.map((t) => (
                      <tr key={t.fc}>
                        <FcCell><a href="#">{t.fc}</a><small>{t.city}</small></FcCell>
                        <td>{t.inn}</td>
                        <td>{t.out}</td>
                        <NetCell $down={t.down}>{t.net}</NetCell>
                      </tr>
                    ))}
                  </tbody>
                </TransferTable>
              </Block>

              <Block>
                <BlockTitle><b>IN FLIGHT</b> · 0 shipments</BlockTitle>
                <Small>Nothing on the way to this network.</Small>
              </Block>
            </Card>
          </Columns>
        </Main>
      </Page>
    </Shell>
  );
}
